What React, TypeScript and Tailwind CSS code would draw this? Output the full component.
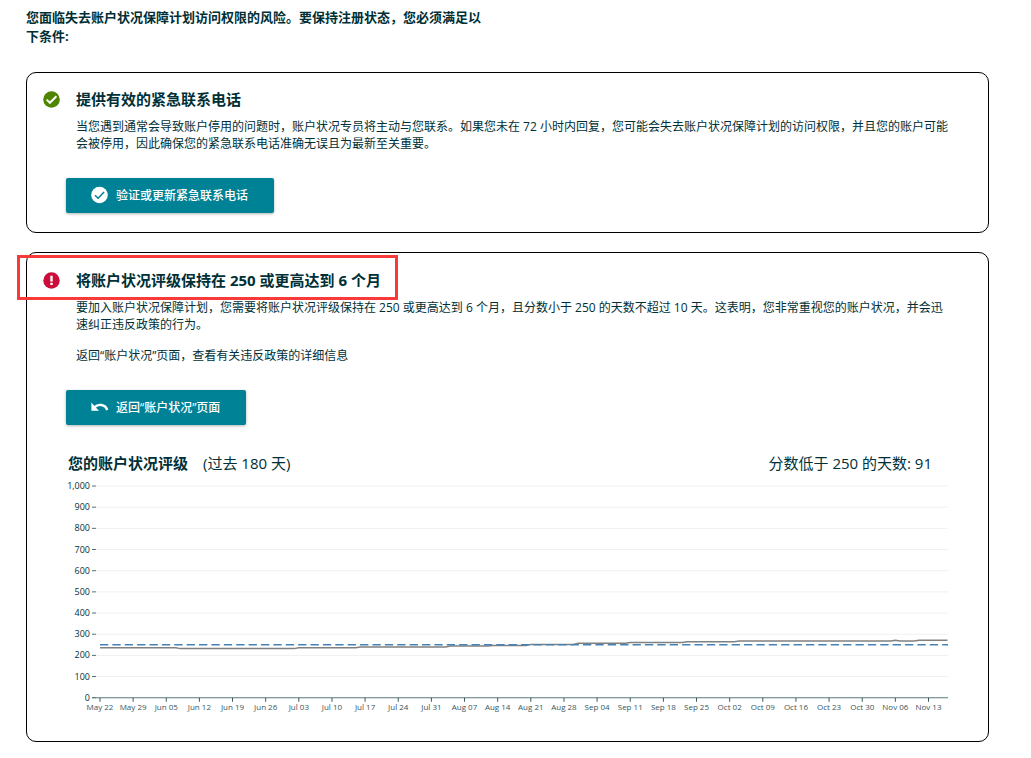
import type { ReactNode } from "react";

const X_LABELS = [
  "May 22", "May 29", "Jun 05", "Jun 12", "Jun 19", "Jun 26", "Jul 03", "Jul 10", "Jul 17",
  "Jul 24", "Jul 31", "Aug 07", "Aug 14", "Aug 21", "Aug 28", "Sep 04", "Sep 11", "Sep 18",
  "Sep 25", "Oct 02", "Oct 09", "Oct 16", "Oct 23", "Oct 30", "Nov 06", "Nov 13",
];

const Y_LABELS = ["0", "100", "200", "300", "400", "500", "600", "700", "800", "900", "1,000"];

// [day, rating]
const RATING = [
  [0, 236], [16, 236], [17, 232], [41, 232], [42, 236], [54, 236], [55, 240], [73, 240],
  [74, 244], [82, 244], [83, 247], [90, 247], [91, 252], [100, 252], [101, 257], [111, 257],
  [112, 261], [123, 261], [124, 264], [134, 264], [135, 268], [167, 268], [168, 271],
  [169, 268], [172, 268], [173, 272], [179, 272],
] as const;

const LEFT = 34;
const RIGHT = 883;
const BASE = 218;
const DAY = 4.74;

const toX = (day: number) => LEFT + day * DAY;
const toY = (score: number) => BASE - score * 0.212;

function RatingChart() {
  const line = RATING.map(([day, score]) => `${toX(day)},${toY(score)}`).join(" ");

  return (
    <svg viewBox="0 0 884 240" className="block w-full" role="img" aria-label="账户状况评级">
      {Y_LABELS.map((label, i) => (
        <g key={label}>
          <line x1={30} x2={RIGHT} y1={toY(i * 100)} y2={toY(i * 100)} stroke="#f0f0f0" />
          <line x1={26} x2={30} y1={toY(i * 100)} y2={toY(i * 100)} stroke="#4f6f75" />
          <text x={24} y={toY(i * 100) + 3} textAnchor="end" className="fill-[#002f36] text-[9px]">
            {label}
          </text>
        </g>
      ))}
      <line x1={26} x2={RIGHT} y1={BASE} y2={BASE} stroke="#5f7f85" />
      {X_LABELS.map((label, i) => (
        <g key={label}>
          <line x1={toX(i * 7)} x2={toX(i * 7)} y1={BASE} y2={BASE + 4} stroke="#37565c" />
          <text x={toX(i * 7)} y={BASE + 12} textAnchor="middle" className="fill-[#37565c] text-[8px]">
            {label}
          </text>
        </g>
      ))}
      <polyline points={line} fill="none" stroke="#808080" strokeWidth={1.5} />
      <line
        x1={LEFT}
        x2={RIGHT}
        y1={toY(250)}
        y2={toY(250)}
        stroke="#4682b4"
        strokeWidth={1.5}
        strokeDasharray="8.3 4.1"
      />
    </svg>
  );
}

function PassedIcon() {
  return (
    <svg viewBox="0 0 17 17" className="size-[17px] shrink-0" aria-hidden="true">
      <circle cx="8.5" cy="8.5" r="8.3" fill="#4f8400" />
      <path d="M3.6 8.6l3.3 3.2 6.5-6.6" fill="none" stroke="#fff" strokeWidth="2" />
    </svg>
  );
}

function FailedIcon() {
  return (
    <svg viewBox="0 0 17 17" className="size-[17px] shrink-0" aria-hidden="true">
      <circle cx="8.5" cy="8.5" r="8.2" fill="#cc0c39" />
      <path d="M7.3 3.8h2.4v5.6H7.3zM7.3 10.8h2.4v2.2H7.3z" fill="#fff" />
    </svg>
  );
}

function VerifyIcon() {
  return (
    <svg viewBox="0 0 20 20" className="size-5" aria-hidden="true">
      <circle cx="9.5" cy="9" r="8.3" fill="currentColor" />
      <path d="M5 9.2l3.1 3 6-6.3" fill="none" stroke="#008296" strokeWidth="1.5" />
    </svg>
  );
}

function UndoIcon() {
  return (
    <svg viewBox="0 0 20 20" className="size-5" aria-hidden="true">
      <path d="M1.4 4.6v8.2h7.6L6 9.8" fill="currentColor" />
      <path d="M4.4 9.4c3.8-4 10.8-3.4 12.8 2.6" fill="none" stroke="currentColor" strokeWidth="2.4" />
    </svg>
  );
}

function ActionButton({ icon, children }: { icon: ReactNode; children: ReactNode }) {
  return (
    <button
      type="button"
      className="flex h-[35px] items-center gap-[6px] rounded-[2px] bg-[#008296] pl-6 pr-[26px] text-[12px] font-medium text-white shadow-[0_1px_3px_rgba(0,0,0,0.3)]"
    >
      {icon}
      {children}
    </button>
  );
}

export default function App() {
  return (
    <main className="bg-white pb-4 pl-[26px] pr-[42px] pt-2 font-['Open_Sans','Noto_Sans_CJK_SC',sans-serif] text-[#002f36]">
      <p className="max-w-[460px] text-[13px] font-bold leading-[19px]">
        您面临失去账户状况保障计划访问权限的风险。要保持注册状态，您必须满足以下条件:
      </p>

      <section className="mt-[26px] rounded-[10px] border border-black pb-[19px] pl-4 pr-6 pt-[15px]">
        <div className="flex items-center gap-4">
          <PassedIcon />
          <h2 className="text-[15px] font-bold leading-[22px]">提供有效的紧急联系电话</h2>
        </div>
        <p className="mt-2 pl-[33px] pr-2 text-[12px] leading-[17px]">
          当您遇到通常会导致账户停用的问题时，账户状况专员将主动与您联系。如果您未在 72 小时内回复，您可能会失去账户状况保障计划的访问权限，并且您的账户可能会被停用，因此确保您的紧急联系电话准确无误且为最新至关重要。
        </p>
        <div className="mt-[26px] pl-[23px]">
          <ActionButton icon={<VerifyIcon />}>验证或更新紧急联系电话</ActionButton>
        </div>
      </section>

      <section className="mt-[19px] rounded-[10px] border border-black pb-[21px] pl-4 pr-6 pt-4">
        <div className="relative flex items-center gap-4">
          <div className="pointer-events-none absolute -left-[26px] -top-[14px] h-[45px] w-[381px] border-3 border-[#f83a3a]" />
          <FailedIcon />
          <h2 className="text-[15px] font-bold leading-[22px]">将账户状况评级保持在 250 或更高达到 6 个月</h2>
        </div>
        <div className="mt-2 pl-[33px] pr-2 text-[12px] leading-[17px]">
          <p className="pr-1">
            要加入账户状况保障计划，您需要将账户状况评级保持在 250 或更高达到 6 个月，且分数小于 250 的天数不超过 10 天。这表明，您非常重视您的账户状况，并会迅速纠正违反政策的行为。
          </p>
          <p className="mt-[14px]">返回“账户状况”页面，查看有关违反政策的详细信息</p>
        </div>
        <div className="mt-[26px] pl-[23px]">
          <ActionButton icon={<UndoIcon />}>返回“账户状况”页面</ActionButton>
        </div>

        <div className="mt-[27px] pl-[23px] pr-[15px]">
          <div className="flex justify-between pl-[2px] pr-[17px] text-[15px] leading-[22px]">
            <h3>
              <span className="mr-[15px] font-bold">您的账户状况评级</span>
              (过去 180 天)
            </h3>
            <p>分数低于 250 的天数: 91</p>
          </div>
          <div className="mt-[6px]">
            <RatingChart />
          </div>
        </div>
      </section>
    </main>
  );
}
